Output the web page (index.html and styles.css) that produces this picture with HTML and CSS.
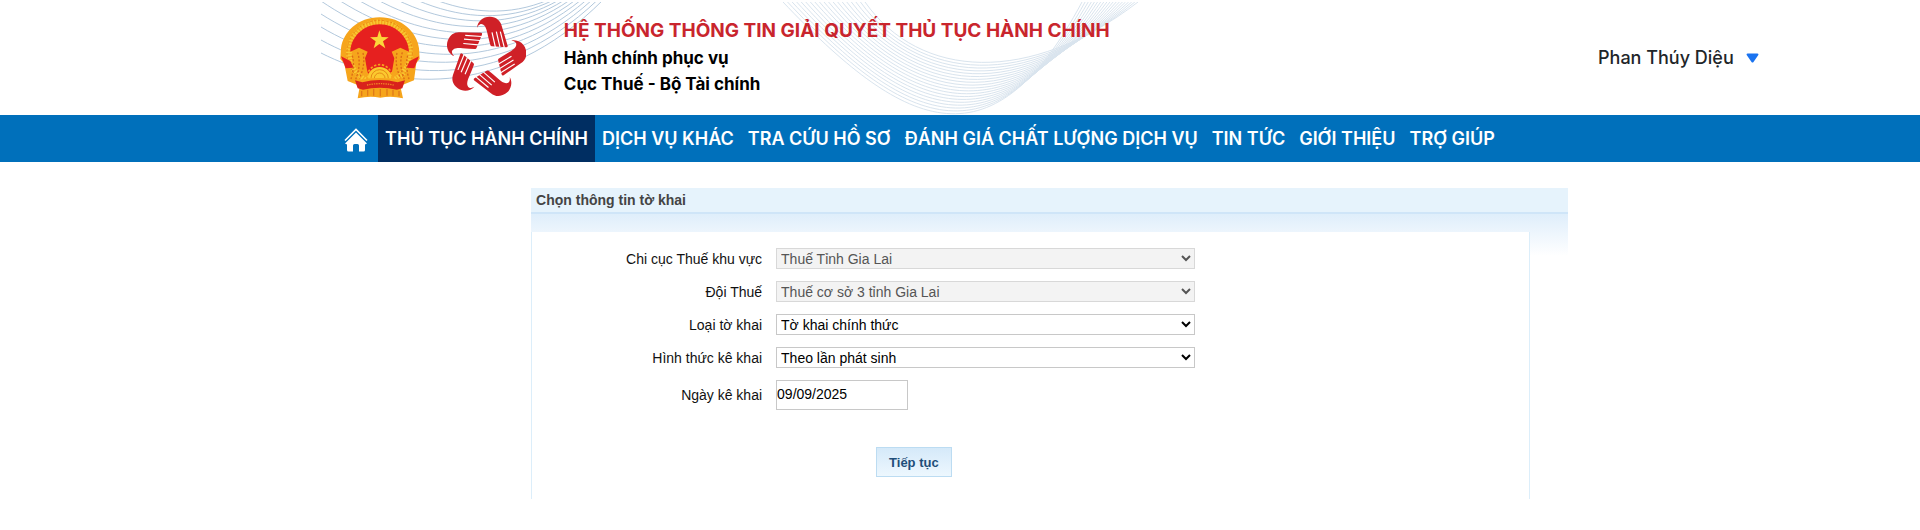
FILE: index.html
```html
<!DOCTYPE html>
<html lang="vi">
<head>
<meta charset="utf-8">
<meta name="viewport" content="width=device-width, initial-scale=1">
<title>Hệ thống thông tin giải quyết thủ tục hành chính</title>
<link rel="stylesheet" href="styles.css">
</head>
<body>
<header class="header">
  <svg class="waves" width="822" height="115" viewBox="320 0 822 115" aria-hidden="true">
    <clipPath id="waveClip"><rect x="321" y="2" width="821" height="113"/></clipPath>
    <g clip-path="url(#waveClip)" fill="none">
      <g id="arcs" stroke="#a9c2d8" stroke-width="0.9"></g>
      <g id="ribbon" stroke="#d9e4ee" stroke-width="1"></g>
    </g>
  </svg>
  <div class="brand">
    <svg class="emblem" width="80" height="82" viewBox="59 46 240 246" role="img" aria-label="Quốc huy Việt Nam">
      <path d="M112 290 L120 245 H238 L248 290 Q214 282 180 288 Q146 282 112 290Z" fill="#f6a51c"/>
      <path d="M178 47 C245 47 290 92 296 140 L298 172 L288 184 L281 236 L246 250 H112 L82 238 L72 186 L60 172 L62 140 C68 92 112 47 178 47Z" fill="#f6a51c"/>
      <circle cx="178" cy="154" r="92" fill="none" stroke="#f9c832" stroke-width="17" stroke-dasharray="5 4"/>
      <circle cx="178" cy="154" r="98" fill="none" stroke="#e98714" stroke-width="3" stroke-dasharray="7 5"/>
      <path d="M178 68 C224 68 264 104 266 150 L240 138 L214 150 L222 170 L216 204 L208 236 H148 L140 204 L134 170 L142 150 L116 138 L90 150 C92 104 132 68 178 68Z" fill="#e6201f"/>
      <path d="M62 164 L90 178 L100 198 L76 200 L70 184Z M296 164 L268 178 L258 198 L282 200 L288 184Z" fill="#e6201f"/>
      <g fill="none" stroke="#dc6a16" stroke-width="4" stroke-dasharray="6 5">
        <path d="M96 162 Q104 194 92 232"/><path d="M112 152 Q124 190 104 238"/><path d="M128 154 Q136 188 118 228"/>
        <path d="M262 162 Q254 194 266 232"/><path d="M246 152 Q234 190 254 238"/><path d="M230 154 Q222 188 240 228"/>
      </g>
      <path d="M177 86 L184 106 L205 107 L188 119 L195 140 L177 127 L160 140 L166 119 L149 107 L171 106Z" fill="#fcd53a"/>
      <path d="M140 234 A38 38 0 0 1 216 234Z" fill="#fbc92f"/>
      <circle cx="178" cy="226" r="37" fill="none" stroke="#f6a51c" stroke-width="5" stroke-dasharray="7 5"/>
      <g fill="none" stroke="#e58a16" stroke-width="3">
        <path d="M152 230 A26 26 0 0 1 204 230"/><path d="M162 230 A16 16 0 0 1 194 230"/>
      </g>
      <path d="M110 236 Q178 222 248 236 L240 260 L228 250 Q178 240 132 250 L118 260Z" fill="#f6a51c"/>
      <path d="M104 236 L126 242 Q178 228 232 242 L254 236 L246 260 L230 264 Q178 252 128 264 L112 260Z" fill="#d9221c"/>
      <path d="M140 250 Q178 242 220 250" fill="none" stroke="#f08a25" stroke-width="4" stroke-dasharray="4 3"/>
      <path d="M124 268 V284 M142 264 V282 M160 262 V282 M180 262 V284 M200 262 V282 M218 264 V282 M236 268 V284" stroke="#e07a18" stroke-width="4"/>
    </svg>
    <svg class="hands" width="80" height="85" viewBox="15 42 240 255" role="img" aria-label="Logo hành chính phục vụ">
      <defs>
        <g id="hand">
          <path d="M108 80 C110 60 128 46 147 47 C166 48 178 58 182 74 L200 134 Q201 139 196 139 L153 136 Q149 136 148 132 Q144 118 139 96 C136 80 130 68 119 69 Q112 71 108 80Z" fill="#cf2027"/>
          <path d="M153 94 L163 138 M166 92 L177 139 M178 92 L190 140" fill="none" stroke="#fff" stroke-width="3.500"/>
        </g>
      </defs>
      <use href="#hand"/>
      <use href="#hand" transform="rotate(72 133 170)"/>
      <use href="#hand" transform="rotate(144 133 170)"/>
      <use href="#hand" transform="rotate(216 133 170)"/>
      <use href="#hand" transform="rotate(288 133 170)"/>
    </svg>
    <div class="titles">
      <h1 class="title">HỆ THỐNG THÔNG TIN GIẢI QUYẾT THỦ TỤC HÀNH CHÍNH</h1>
      <p class="subtitle">Hành chính phục vụ</p>
      <p class="subtitle">Cục Thuế - Bộ Tài chính</p>
    </div>
  </div>
  <button class="user" type="button">Phan Thúy Diệu
    <svg width="13" height="10" viewBox="0 0 13 10" aria-hidden="true"><path d="M1.500 0.500 H11.500 Q13 0.500 12.300 2 L7.500 9 Q6.500 10 5.500 9 L0.700 2 Q0 0.500 1.500 0.500Z" fill="#1a73f0"/></svg>
  </button>
</header>
<nav class="nav">
  <a class="home" href="#" aria-label="Trang chủ">
    <svg width="24" height="24" viewBox="0 0 24 24" aria-hidden="true"><path d="M1 12.500 L12 1.500 L23 12.500" fill="none" stroke="#fff" stroke-width="1.600"/><path d="M12 4.500 L23 15.500 L21 16.500 V22 Q21 23.500 19.500 23.500 H15 V17.500 Q15 16 13.500 16 H10.500 Q9 16 9 17.500 V23.500 H4.500 Q3 23.500 3 22 V16.500 L1 15.500Z" fill="#fff"/></svg>
  </a>
  <a class="link active" href="#">THỦ TỤC HÀNH CHÍNH</a>
  <a class="link" href="#">DỊCH VỤ KHÁC</a>
  <a class="link" href="#">TRA CỨU HỒ SƠ</a>
  <a class="link" href="#">ĐÁNH GIÁ CHẤT LƯỢNG DỊCH VỤ</a>
  <a class="link" href="#">TIN TỨC</a>
  <a class="link" href="#">GIỚI THIỆU</a>
  <a class="link" href="#">TRỢ GIÚP</a>
</nav>
<main class="main">
  <section class="panel">
    <h2 class="panel-title">Chọn thông tin tờ khai</h2>
    <div class="panel-body">
      <form class="form">
        <label for="region">Chi cục Thuế khu vực</label>
        <select id="region" class="field" disabled><option>Thuế Tỉnh Gia Lai</option></select>
        <label for="team">Đội Thuế</label>
        <select id="team" class="field" disabled><option>Thuế cơ sở 3 tỉnh Gia Lai</option></select>
        <label for="kind">Loại tờ khai</label>
        <select id="kind" class="field"><option>Tờ khai chính thức</option></select>
        <label for="method">Hình thức kê khai</label>
        <select id="method" class="field"><option>Theo lần phát sinh</option></select>
        <label for="date">Ngày kê khai</label>
        <input id="date" class="field date" type="text" value="09/09/2025">
        <button class="submit" type="button">Tiếp tục</button>
      </form>
    </div>
  </section>
</main>
<script src="waves.js"></script>
</body>
</html>
```
FILE: styles.css
```css
* { box-sizing: border-box; }
body {
  margin: 0;
  background: #fff;
  font-family: "Liberation Sans", Arial, sans-serif;
  font-size: 14px;
  color: #111;
}
.header {
  position: relative;
  display: flex;
  justify-content: space-between;
  align-items: center;
  min-height: 115px;
  padding: 0 8.4% 0 17.7%;
  font-family: Inter, sans-serif;
}
.waves {
  position: absolute;
  left: 16.67%;
  top: 0;
}
.brand {
  position: relative;
  display: flex;
  align-items: center;
}
.hands { margin-left: 26px; }
.titles { margin-left: 38px; }
.title, .subtitle { margin: 0; line-height: 26px; font-weight: 700; }
.title { font-size: 19px; color: #c9252d; padding-bottom: 1px; }
.subtitle { font-size: 17px; color: #000; }
.user {
  display: flex;
  align-items: center;
  gap: 12px;
  padding: 0;
  border: 0;
  background: none;
  font: 500 18px/24px Inter, sans-serif;
  color: #212529;
}
.nav {
  display: flex;
  align-items: stretch;
  min-height: 47px;
  padding-left: 17.4%;
  background: #0070bb;
  font: 600 18px/47px Inter, sans-serif;
}
.home {
  display: flex;
  align-items: center;
  padding: 2px 10px 0;
}
.link {
  padding: 0 7px;
  color: #fff;
  text-decoration: none;
  white-space: nowrap;
}
.active { background: #002e62; }
.main { padding: 26px 18.33% 32px 27.66%; }
.panel {
  background: linear-gradient(#dfeefb, #fff) 0 26px / 100% 42px no-repeat;
}
.panel-title {
  margin: 0;
  padding: 0 5px;
  border-bottom: 2px solid #cfe5f8;
  background: #e6f3fc;
  font-size: 14px;
  line-height: 24px;
  color: #444;
}
.panel-body {
  margin: 18px 38px 0 0;
  padding: 16px 0 22px;
  border: solid #dceefa;
  border-width: 0 1px;
  background: #fff;
}
.form {
  display: grid;
  grid-template-columns: 230px minmax(0, 419px);
  column-gap: 14px;
  row-gap: 12px;
  align-items: center;
}
.form label { text-align: right; line-height: 20px; }
.field {
  width: 100%;
  height: 21px;
  margin: 0;
  padding: 0;
  border: 1px solid #c8c8c8;
  border-radius: 0;
  background-color: #fff;
  font: 14px "Liberation Sans", Arial, sans-serif;
  color: #000;
}
.field:disabled {
  background-color: #f3f3f3;
  border-color: #d8d8d8;
  color: #555;
  opacity: 1;
}
.date { width: 132px; height: 30px; padding-bottom: 3px; }
.submit {
  grid-column: 2;
  justify-self: start;
  height: 30px;
  margin: 25px 0 0 100px;
  padding: 0 12px;
  border: 1px solid #bcdcf2;
  background: linear-gradient(#d5e9f9, #edf7fe);
  font: bold 13px "Liberation Sans", Arial, sans-serif;
  color: #1f4e79;
}
```
FILE: waves.js
```js
const SVG_NS = "http://www.w3.org/2000/svg";

function addCurve(group, p) {
  const path = document.createElementNS(SVG_NS, "path");
  path.setAttribute("d", `M${p[0]},${p[1]} C${p[2]},${p[3]} ${p[4]},${p[5]} ${p[6]},${p[7]}`);
  group.appendChild(path);
}

// Draws count curves blended evenly between two cubic curves.
function addFamily(id, from, to, count) {
  const group = document.getElementById(id);
  for (let i = 0; i < count; i++) {
    const t = i / (count - 1);
    addCurve(group, from.map((v, k) => v + (to[k] - v) * t));
  }
}

addFamily("arcs", [321, 53, 390, 88, 500, 103, 603, 0], [321, -77, 390, -12, 470, 33, 548, 0], 11);
addFamily("ribbon", [865, 2, 920, 80, 1030, 85, 1138, 2], [783, 2, 900, 125, 990, 175, 1082, 2], 19);
```
